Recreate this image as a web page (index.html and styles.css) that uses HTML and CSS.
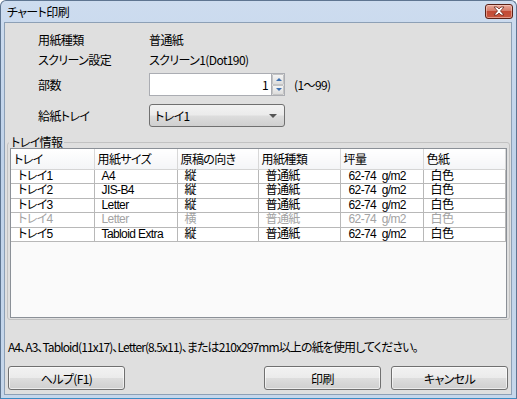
FILE: index.html
```html
<!DOCTYPE html>
<html lang="ja">
<head>
    <meta charset="UTF-8">
    <title>チャート印刷</title>
    <link rel="stylesheet" href="styles.css">
</head>
<body>
    <div class="window">
        <div class="titlebar">
            <span class="title">チャート印刷</span>
            <button class="close-button" title="閉じる">
                <svg width="14" height="10" viewBox="0 0 14 10">
                    <path d="M2 1 L5 1 L7 3 L9 1 L12 1 L8.5 5 L12 9 L9 9 L7 7 L5 9 L2 9 L5.5 5 Z" fill="#fff" stroke="#6b2a20" stroke-width="0.8" stroke-linejoin="round"/>
                </svg>
            </button>
        </div>

        <div class="client">
            <div class="settings">
                <div class="row">
                    <span class="label">用紙種類</span>
                    <span>普通紙</span>
                </div>
                <div class="row">
                    <span class="label">スクリーン設定</span>
                    <span>スクリーン1(Dot190)</span>
                </div>
                <div class="row row-copies">
                    <span class="label">部数</span>
                    <div class="spin">
                        <div class="spin-input">1</div>
                        <div class="spin-buttons">
                            <span class="spin-up"></span>
                            <span class="spin-down"></span>
                        </div>
                    </div>
                    <span class="range">(1～99)</span>
                </div>
                <div class="row row-tray">
                    <span class="label">給紙トレイ</span>
                    <div class="combo">
                        <span>トレイ1</span>
                        <span class="combo-arrow"></span>
                    </div>
                </div>
            </div>

            <fieldset class="group">
                <legend>トレイ情報</legend>
                <div class="list">
                    <table class="tray-table">
                        <thead>
                            <tr>
                                <th>トレイ</th>
                                <th>用紙サイズ</th>
                                <th>原稿の向き</th>
                                <th>用紙種類</th>
                                <th>坪量</th>
                                <th>色紙</th>
                            </tr>
                        </thead>
                        <tbody id="trays"></tbody>
                    </table>
                </div>
            </fieldset>

            <p class="note">A4、A3、Tabloid(11x17)、Letter(8.5x11)、または210x297mm以上の紙を使用してください。</p>

            <div class="buttons">
                <button class="btn">ヘルプ(F1)</button>
                <span class="spacer"></span>
                <button class="btn">印刷</button>
                <button class="btn">キャンセル</button>
            </div>
        </div>
    </div>

    <script>
        const trays = [
            { name: "トレイ1", size: "A4", dir: "縦", type: "普通紙", weight: "62-74  g/m2", color: "白色" },
            { name: "トレイ2", size: "JIS-B4", dir: "縦", type: "普通紙", weight: "62-74  g/m2", color: "白色" },
            { name: "トレイ3", size: "Letter", dir: "縦", type: "普通紙", weight: "62-74  g/m2", color: "白色" },
            { name: "トレイ4", size: "Letter", dir: "横", type: "普通紙", weight: "62-74  g/m2", color: "白色", disabled: true },
            { name: "トレイ5", size: "Tabloid Extra", dir: "縦", type: "普通紙", weight: "62-74  g/m2", color: "白色" }
        ];

        const body = document.getElementById("trays");
        trays.forEach(t => {
            body.innerHTML += `
                <tr class="${t.disabled ? 'disabled' : ''}">
                    <td>${t.name}</td>
                    <td>${t.size}</td>
                    <td>${t.dir}</td>
                    <td>${t.type}</td>
                    <td class="weight">${t.weight}</td>
                    <td>${t.color}</td>
                </tr>
            `;
        });
    </script>
</body>
</html>
```

FILE: styles.css
```css
* { margin: 0; padding: 0; box-sizing: border-box; }
body {
    font-family: "Noto Sans CJK JP", "Noto Sans", sans-serif;
    font-size: 12px;
    font-feature-settings: "palt";
    letter-spacing: -0.6px;
    color: #000;
    background: #fff;
    overflow: hidden;
}
.window {
    width: 517px;
    height: 399px;
    display: flex;
    flex-direction: column;
    padding: 0 4px 3px 3px;
    background: linear-gradient(to bottom, #cddcef, #bfd2e9 40%, #c6d7eb);
    border: 1px solid #5e7591;
    border-bottom-color: #3d8cc4;
    border-radius: 6px 6px 0 0;
}
.titlebar {
    height: 21px;
    flex: none;
    display: flex;
    align-items: center;
    padding-left: 3px;
}
.title {
    flex: 1;
    line-height: 14px;
    color: #000;
}
.close-button {
    width: 28px;
    height: 15px;
    margin-top: -1px;
    margin-right: -1px;
    border: 1px solid #5b2117;
    border-radius: 3px;
    background: linear-gradient(to bottom, #e9a99b 0%, #d47b69 45%, #c24a35 50%, #c7563f 100%);
    box-shadow: inset 0 0 0 1px rgba(255, 220, 210, 0.5);
    display: flex;
    align-items: center;
    justify-content: center;
}
.client {
    flex: 1;
    background: #dfdfdf;
    border: 1px solid #8da0b6;
    display: flex;
    flex-direction: column;
}
.settings {
    padding: 6px 0 0 33px;
}
.row {
    display: flex;
    align-items: center;
    height: 20px;
}
.label {
    width: 111px;
    flex: none;
}
.row-copies {
    height: 23px;
    margin-top: 4px;
}
.row-tray {
    height: 23px;
    margin-top: 8px;
}
.spin {
    display: flex;
    height: 23px;
}
.spin-input {
    width: 122px;
    background: #fff;
    border: 1px solid #abadb3;
    border-right: none;
    text-align: right;
    padding-right: 3px;
    line-height: 21px;
}
.spin-buttons {
    width: 14px;
    display: flex;
    flex-direction: column;
    border: 1px solid #abadb3;
    background: #fff;
}
.spin-up, .spin-down {
    flex: 1;
    position: relative;
    background: linear-gradient(to bottom, #f4f4f4, #dcdcdc);
    border: 1px solid #c4c4c4;
    border-radius: 1px;
}
.spin-up::after, .spin-down::after {
    content: "";
    position: absolute;
    left: 3px;
    top: 3px;
    border-left: 3px solid transparent;
    border-right: 3px solid transparent;
}
.spin-up::after { border-bottom: 3px solid #3c6fb0; }
.spin-down::after { border-top: 3px solid #3c6fb0; top: 2px; }
.range {
    margin-left: 9px;
}
.combo {
    width: 136px;
    height: 23px;
    display: flex;
    align-items: center;
    justify-content: space-between;
    padding: 0 7px 0 5px;
    border: 1px solid #707070;
    border-radius: 3px;
    background: linear-gradient(to bottom, #f2f2f2 0%, #ebebeb 48%, #dddddd 52%, #cfcfcf 100%);
}
.combo-arrow {
    border-left: 4px solid transparent;
    border-right: 4px solid transparent;
    border-top: 4px solid #555;
    margin-top: 1px;
}
.group {
    margin: 9px 2px 0 2px;
    padding: 0 2px 1px 2px;
    border: 1px solid #c2c2c2;
    border-radius: 3px;
}
.group legend {
    padding: 0 2px;
    line-height: 12px;
    margin-left: -1px;
}
.list {
    height: 170px;
    background: #fafafa;
    border: 1px solid #8b9097;
    overflow: hidden;
}
.tray-table {
    border-collapse: collapse;
    table-layout: fixed;
    width: 494px;
}
.tray-table th {
    height: 20px;
    text-align: left;
    font-weight: normal;
    padding-left: 3px;
    background: linear-gradient(to bottom, #ffffff, #f4f5f7);
    border-right: 1px solid #d8d8d8;
    border-bottom: 1px solid #d5d5d5;
}
.tray-table th:nth-child(1) { width: 83px; }
.tray-table th:nth-child(2) { width: 83px; }
.tray-table th:nth-child(3) { width: 81px; }
.tray-table th:nth-child(4) { width: 82px; }
.tray-table th:nth-child(5) { width: 83px; }
.tray-table th:nth-child(6) { width: 82px; }
.tray-table td {
    height: 14.5px;
    line-height: 13px;
    padding: 0 0 0 7px;
    font-family: "Liberation Sans", "Noto Sans CJK JP", sans-serif;
    background: #fff;
    border-right: 1px solid #b8b8b8;
    border-bottom: 1px solid #b8b8b8;
    white-space: pre;
}
.tray-table td.weight {
    padding-left: 8px;
}
.tray-table tr.disabled td { color: #a3a3a3; }
.note {
    margin-top: 20px;
    padding-left: 3px;
    line-height: 14px;
    letter-spacing: -0.9px;
    white-space: nowrap;
}
.buttons {
    display: flex;
    gap: 10px;
    margin: 12px 3px 0 3px;
}
.spacer { flex: 1; }
.btn {
    width: 117px;
    height: 24px;
    font-family: inherit;
    font-size: 12px;
    font-feature-settings: "palt";
    letter-spacing: -0.6px;
    color: #000;
    border: 1px solid #707070;
    border-radius: 3px;
    background: linear-gradient(to bottom, #f2f2f2 0%, #ebebeb 48%, #dddddd 52%, #cfcfcf 100%);
    box-shadow: inset 0 0 0 1px rgba(255, 255, 255, 0.6);
}
```
